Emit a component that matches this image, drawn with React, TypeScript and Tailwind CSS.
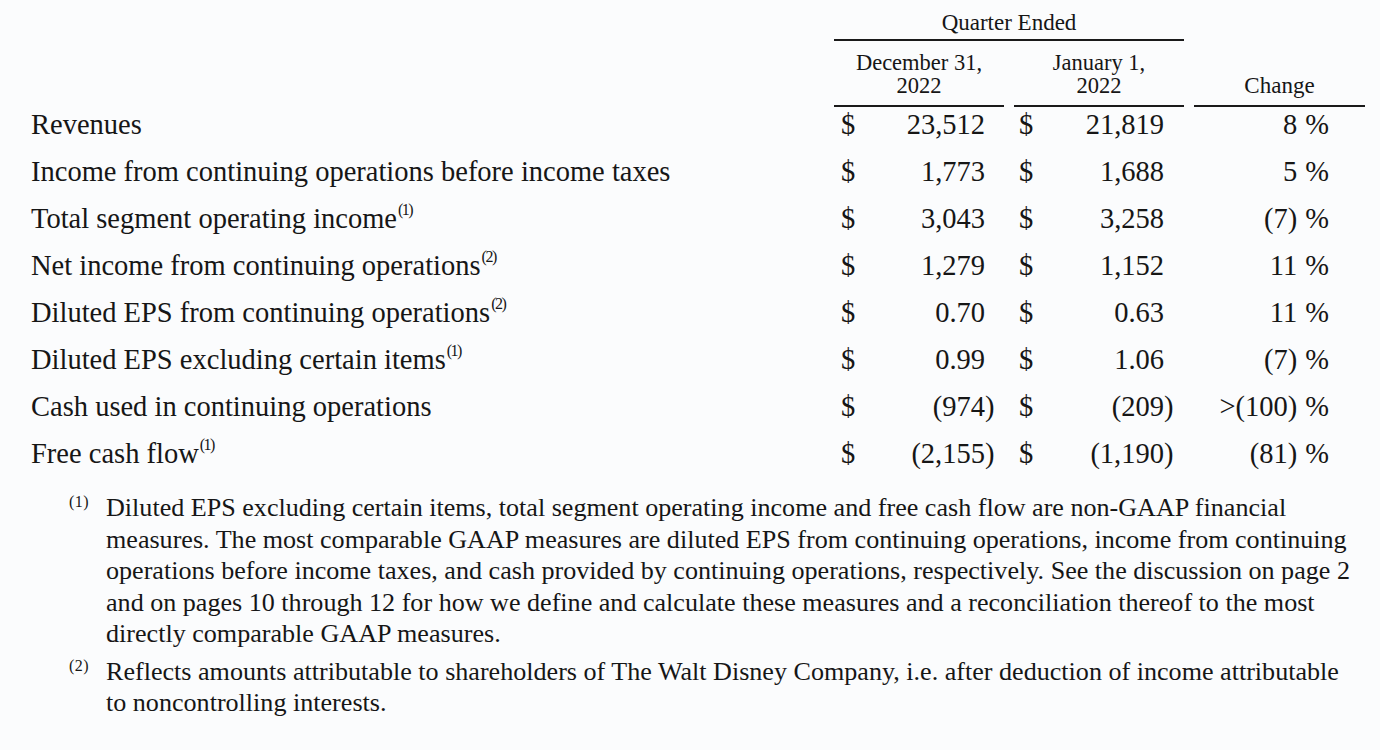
import React from 'react';

type Row = {
  label: string;
  note?: string;
  cur: string;
  prior: string;
  change: string;
};

const rows: Row[] = [
  { label: 'Revenues', cur: '23,512', prior: '21,819', change: '8' },
  { label: 'Income from continuing operations before income taxes', cur: '1,773', prior: '1,688', change: '5' },
  { label: 'Total segment operating income', note: '1', cur: '3,043', prior: '3,258', change: '(7)' },
  { label: 'Net income from continuing operations', note: '2', cur: '1,279', prior: '1,152', change: '11' },
  { label: 'Diluted EPS from continuing operations', note: '2', cur: '0.70', prior: '0.63', change: '11' },
  { label: 'Diluted EPS excluding certain items', note: '1', cur: '0.99', prior: '1.06', change: '(7)' },
  { label: 'Cash used in continuing operations', cur: '(974)', prior: '(209)', change: '>(100)' },
  { label: 'Free cash flow', note: '1', cur: '(2,155)', prior: '(1,190)', change: '(81)' },
];

// accounting style: the closing paren hangs past the figure column
function Amount({ value, pl, pr }: { value: string; pl: string; pr: string }) {
  const neg = value.endsWith(')');
  const body = neg ? value.slice(0, -1) : value;
  return (
    <div className={`flex items-start justify-between ${pl} ${pr}`}>
      <span>$</span>
      <span className="flex">
        <span>{body}</span>
        <span className="w-[10px]">{neg ? ')' : ''}</span>
      </span>
    </div>
  );
}

export default function App() {
  return (
    <div className="min-h-[750px] w-[1380px] bg-[#fbfcfd] font-['Liberation_Serif','Times_New_Roman',serif] text-[#161616]">
      <div className="grid grid-cols-[1fr_170px_170px_171px] gap-x-[10px] pl-[31px] pr-[15px]">
        {/* header */}
        <div />
        <div className="col-span-2 border-b-2 border-[#1a1a1a] pt-[10px] pb-[3px] text-center text-[23px] leading-[26px]">
          Quarter Ended
        </div>
        <div />

        <div />
        <div className="mt-[10px] border-b-2 border-[#1a1a1a] pb-[8px] text-center text-[22.5px] leading-[23px]">
          December 31,
          <br />
          2022
        </div>
        <div className="mt-[10px] border-b-2 border-[#1a1a1a] pb-[8px] text-center text-[22.5px] leading-[23px]">
          January 1,
          <br />
          2022
        </div>
        <div className="mt-[10px] flex items-end justify-center border-b-2 border-[#1a1a1a] pb-[8px] text-[23px] leading-[23px]">
          Change
        </div>

        {/* body */}
        {rows.map((r) => (
          <React.Fragment key={r.label}>
            <div className="h-[47px] whitespace-nowrap text-[28.5px] leading-[36px]">
              {r.label}
              {r.note && (
                <sup className="top-[-13px] ml-[1px] text-[16px] tracking-[-1.5px]">({r.note})</sup>
              )}
            </div>
            <div className="h-[47px] text-[28.5px] leading-[36px]">
              <Amount value={r.cur} pl="pl-[7px]" pr="pr-[9px]" />
            </div>
            <div className="h-[47px] text-[28.5px] leading-[36px]">
              <Amount value={r.prior} pl="pl-[5px]" pr="pr-[10px]" />
            </div>
            <div className="flex h-[47px] items-start justify-end pr-[36px] text-[28.5px] leading-[36px]">
              <span>{r.change}</span>
              <span className="ml-[8px]">%</span>
            </div>
          </React.Fragment>
        ))}
      </div>

      {/* footnotes */}
      <div className="flex flex-col gap-[6px] pt-[9px] pl-[69px] text-[26.1px] leading-[31.5px]">
        <div className="flex">
          <span className="w-[37px] shrink-0 text-[16px] leading-[19px] tracking-[0.5px]">(1)</span>
          <p className="whitespace-nowrap">
            Diluted EPS excluding certain items, total segment operating income and free cash flow are non-GAAP financial
            <br />
            measures. The most comparable GAAP measures are diluted EPS from continuing operations, income from continuing
            <br />
            operations before income taxes, and cash provided by continuing operations, respectively. See the discussion on page 2
            <br />
            and on pages 10 through 12 for how we define and calculate these measures and a reconciliation thereof to the most
            <br />
            directly comparable GAAP measures.
          </p>
        </div>
        <div className="flex">
          <span className="w-[37px] shrink-0 text-[16px] leading-[19px] tracking-[0.5px]">(2)</span>
          <p className="whitespace-nowrap">
            Reflects amounts attributable to shareholders of The Walt Disney Company, i.e. after deduction of income attributable
            <br />
            to noncontrolling interests.
          </p>
        </div>
      </div>
    </div>
  );
}
